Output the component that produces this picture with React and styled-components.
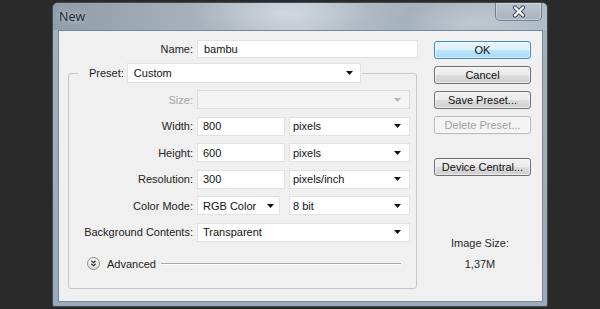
import React from "react";
import styled, { createGlobalStyle } from "styled-components";

const GlobalStyle = createGlobalStyle`
  body {
    margin: 0;
    background: #2b2b2b;
    font-family: "Liberation Sans", Arial, sans-serif;
  }
`;

const Page = styled.div`
  width: 600px;
  height: 309px;
  box-sizing: border-box;
  padding: 2px 0 0 52px;
  background: #2a2a2a;
  overflow: hidden;
`;

const Window = styled.div`
  width: 496px;
  height: 305px;
  box-sizing: border-box;
  border: 1px solid #3f4a54;
  border-radius: 6px 6px 2px 2px;
  background: linear-gradient(to bottom, #a4b1bd, #98aabb);
  display: flex;
  flex-direction: column;
`;

const TitleBar = styled.div`
  height: 27px;
  display: flex;
  justify-content: space-between;
  align-items: flex-start;
  padding-left: 6px;
  border-radius: 5px 5px 0 0;
  background:
    radial-gradient(ellipse 90px 30px at 230px 10px, rgba(255, 255, 255, 0.35), transparent),
    radial-gradient(ellipse 70px 25px at 420px 20px, rgba(255, 255, 255, 0.25), transparent),
    linear-gradient(100deg, #8f9ca9 0%, #a7b2bc 30%, #bac4cd 50%, #a5b1bc 72%, #b1bdc7 100%);
`;

const Title = styled.div`
  font-family: "Open Sans", "Liberation Sans", sans-serif;
  font-size: 12.5px;
  line-height: 16px;
  margin-top: 6px;
  color: #1b2632;
  text-shadow: 0 0 6px rgba(255, 255, 255, 0.7);
`;

const CloseButton = styled.div`
  width: 47px;
  height: 18px;
  margin-right: 5px;
  box-sizing: border-box;
  border: 1px solid rgba(70, 85, 100, 0.6);
  border-top: none;
  border-radius: 0 0 5px 5px;
  background: linear-gradient(to bottom, #b9c4ce, #a8b4bf);
  box-shadow: inset 0 0 0 1px rgba(255, 255, 255, 0.3);
  display: flex;
  align-items: center;
  justify-content: center;
`;

const Client = styled.div`
  flex: 1;
  margin: 0 4px 4px 5px;
  box-sizing: border-box;
  border: 1px solid #7b8996;
  background: #f0f0f0;
  display: flex;
  padding: 9px 0 0 9px;
`;

const LeftPane = styled.div`
  width: 350px;
  display: flex;
  flex-direction: column;
`;

const RightPane = styled.div`
  width: 97px;
  margin-left: 16px;
  padding-top: 1px;
  display: flex;
  flex-direction: column;
  gap: 7px;
`;

const Row = styled.div`
  display: flex;
  align-items: center;
  height: ${(p) => p.h || 19}px;
  gap: 4px;
`;

const Label = styled.div`
  width: ${(p) => (p.w ? `${p.w}px` : "auto")};
  flex-shrink: 0;
  text-align: right;
  font-size: 11px;
  color: ${(p) => (p.disabled ? "#a5a5a5" : "#222")};
`;

const Field = styled.div`
  width: ${(p) => p.w}px;
  height: ${(p) => p.h || 19}px;
  margin-left: ${(p) => p.ml || 0}px;
  box-sizing: border-box;
  flex-shrink: 0;
  border: 1px solid ${(p) => (p.disabled ? "#dcdcdc" : "#e2e2e2")};
  background: ${(p) => (p.disabled ? "#f3f3f3" : "#fff")};
  padding: 0 ${(p) => p.pr || 8}px 0 ${(p) => p.pl || 5}px;
  display: flex;
  align-items: center;
  justify-content: space-between;
  font-size: 11px;
  color: #111;
`;

const GroupBox = styled.fieldset`
  margin: 5px 0 0 0;
  padding: 0;
  width: 349px;
  height: 226px;
  box-sizing: border-box;
  border: 1px solid #c3c8cc;
  border-radius: 3px;
`;

const GroupLegend = styled.legend`
  margin-left: 9px;
  padding: 0 1px 0 11px;
  height: 20px;
  display: flex;
  align-items: center;
  gap: 3px;
`;

const GroupBody = styled.div`
  padding-top: 7px;
  display: flex;
  flex-direction: column;
  gap: 7.6px;
`;

const AdvancedRow = styled.div`
  margin-top: 15px;
  height: 14px;
  display: flex;
  align-items: center;
  padding: 0 15px 0 18px;
  gap: 7px;
  font-size: 11px;
  color: #222;
`;

const Rule = styled.div`
  flex: 1;
  height: 1px;
  margin-left: -2px;
  background: #a9a9a9;
  box-shadow: 0 1px 0 #fff;
`;

const Button = styled.div`
  height: 18px;
  margin-top: ${(p) => p.mt || 0}px;
  box-sizing: border-box;
  border: 1px solid ${(p) => (p.primary ? "#3c8dc8" : p.disabled ? "#b5b9bc" : "#707070")};
  border-radius: 3px;
  background: ${(p) =>
    p.primary
      ? "linear-gradient(to bottom, #eaf6fd 0%, #d9f0fc 49%, #bee6fd 50%, #a7d9f5 100%)"
      : p.disabled
      ? "#f4f4f4"
      : "linear-gradient(to bottom, #f2f2f2 0%, #ebebeb 49%, #dddddd 50%, #cfcfcf 100%)"};
  box-shadow: inset 0 0 0 1px rgba(255, 255, 255, 0.6);
  display: flex;
  align-items: center;
  justify-content: center;
  font-size: 11px;
  color: ${(p) => (p.disabled ? "#a2a2a2" : "#111")};
`;

const Info = styled.div`
  margin-top: ${(p) => p.mt || 0}px;
  padding-right: 5px;
  text-align: center;
  font-size: 11px;
  line-height: 13px;
  color: #2a2a2a;
`;

const Arrow = ({ disabled }) => (
  <svg width="7" height="4" viewBox="0 0 7 4">
    <path d="M0 0h7L3.5 4z" fill={disabled ? "#b8b8b8" : "#111"} />
  </svg>
);

const CloseGlyph = () => (
  <svg width="16" height="13" viewBox="0 0 16 13">
    <path d="M4 2.5l8 8M12 2.5l-8 8" stroke="#3a4754" strokeWidth="4.2" strokeLinecap="round" />
    <path d="M4 2.5l8 8M12 2.5l-8 8" stroke="#fff" strokeWidth="2.4" strokeLinecap="round" />
  </svg>
);

const ExpandIcon = () => (
  <svg width="13" height="13" viewBox="0 0 13 13">
    <defs>
      <linearGradient id="adv" x1="0" y1="0" x2="0" y2="1">
        <stop offset="0" stopColor="#ffffff" />
        <stop offset="1" stopColor="#d6d6d6" />
      </linearGradient>
    </defs>
    <circle cx="6.5" cy="6.5" r="6" fill="url(#adv)" stroke="#8c8c8c" />
    <path d="M4.3 3.8l2.2 1.8 2.2-1.8M4.3 6.8l2.2 1.8 2.2-1.8" fill="none" stroke="#333" strokeWidth="1.2" />
  </svg>
);

const Select = ({ w, value, pr, pl, ml, disabled, h }) => (
  <Field w={w} pr={pr} pl={pl} ml={ml} h={h} disabled={disabled}>
    <span>{value}</span>
    <Arrow disabled={disabled} />
  </Field>
);

const App = () => (
  <Page>
    <GlobalStyle />
    <Window>
      <TitleBar>
        <Title>New</Title>
        <CloseButton>
          <CloseGlyph />
        </CloseButton>
      </TitleBar>
      <Client>
        <LeftPane>
          <Row h={18}>
            <Label w={125}>Name:</Label>
            <Field w={221} h={18} pl={6}>bambu</Field>
          </Row>
          <GroupBox>
            <GroupLegend>
              <Label>Preset:</Label>
              <Select w={234} h={20} pl={6} pr={7} value="Custom" />
            </GroupLegend>
            <GroupBody>
              <Row>
                <Label w={124} disabled>Size:</Label>
                <Select w={213} disabled value="" />
              </Row>
              <Row>
                <Label w={124}>Width:</Label>
                <Field w={88}>800</Field>
                <Select w={121} pl={3} value="pixels" />
              </Row>
              <Row>
                <Label w={124}>Height:</Label>
                <Field w={88}>600</Field>
                <Select w={121} pl={3} value="pixels" />
              </Row>
              <Row>
                <Label w={124}>Resolution:</Label>
                <Field w={88}>300</Field>
                <Select w={121} pl={3} value="pixels/inch" />
              </Row>
              <Row>
                <Label w={124}>Color Mode:</Label>
                <Select w={83} pr={5} value="RGB Color" />
                <Select w={121} pl={3} ml={5} value="8 bit" />
              </Row>
              <Row>
                <Label w={124}>Background Contents:</Label>
                <Select w={213} value="Transparent" />
              </Row>
            </GroupBody>
            <AdvancedRow>
              <ExpandIcon />
              <span>Advanced</span>
              <Rule />
            </AdvancedRow>
          </GroupBox>
        </LeftPane>
        <RightPane>
          <Button primary>OK</Button>
          <Button>Cancel</Button>
          <Button>Save Preset...</Button>
          <Button disabled>Delete Preset...</Button>
          <Button mt={17}>Device Central...</Button>
          <Info mt={54}>Image Size:</Info>
          <Info mt={1}>1,37M</Info>
        </RightPane>
      </Client>
    </Window>
  </Page>
);

export default App;
